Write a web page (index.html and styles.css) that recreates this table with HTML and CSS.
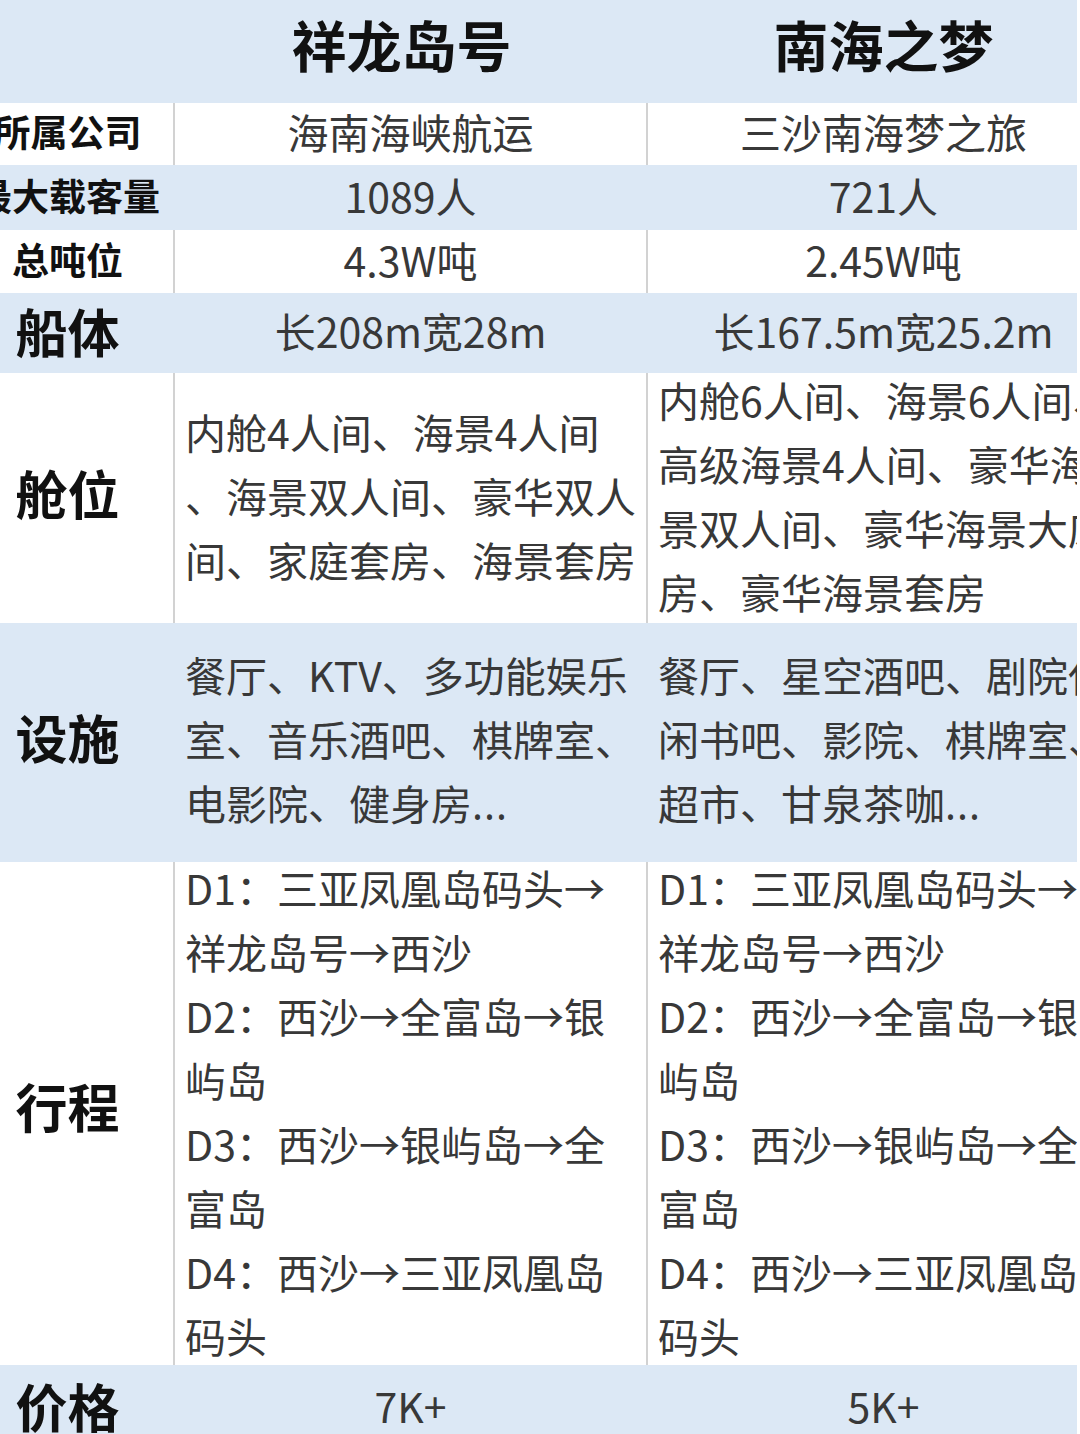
FILE: index.html
```html
<!DOCTYPE html>
<html lang="zh-CN">
<head>
<meta charset="utf-8">
<title>邮轮对比</title>
<link rel="stylesheet" href="styles.css">
</head>
<body>
<div class="frame">
  <div class="sheet">
    <div class="row blue head">
      <div class="cell label"></div>
      <div class="cell title title-a">祥龙岛号</div>
      <div class="cell title">南海之梦</div>
    </div>
    <div class="row r1">
      <div class="cell label small">所属公司</div>
      <div class="cell val">海南海峡航运</div>
      <div class="cell val">三沙南海梦之旅</div>
    </div>
    <div class="row blue r2">
      <div class="cell label small">最大载客量</div>
      <div class="cell val">1089人</div>
      <div class="cell val">721人</div>
    </div>
    <div class="row r3">
      <div class="cell label small">总吨位</div>
      <div class="cell val">4.3W吨</div>
      <div class="cell val">2.45W吨</div>
    </div>
    <div class="row blue r4">
      <div class="cell label big">船体</div>
      <div class="cell val">长208m宽28m</div>
      <div class="cell val">长167.5m宽25.2m</div>
    </div>
    <div class="row r5">
      <div class="cell label big">舱位</div>
      <div class="cell multi"><p>内舱4人间、海景4人间<br>、海景双人间、豪华双人<br>间、家庭套房、海景套房</p></div>
      <div class="cell multi"><p>内舱6人间、海景6人间、<br>高级海景4人间、豪华海<br>景双人间、豪华海景大床<br>房、豪华海景套房</p></div>
    </div>
    <div class="row blue r6">
      <div class="cell label big">设施</div>
      <div class="cell multi"><p>餐厅、KTV、多功能娱乐<br>室、音乐酒吧、棋牌室、<br>电影院、健身房<span class="dots">...</span></p></div>
      <div class="cell multi"><p>餐厅、星空酒吧、剧院休<br>闲书吧、影院、棋牌室、<br>超市、甘泉茶咖<span class="dots">...</span></p></div>
    </div>
    <div class="row r7">
      <div class="cell label big">行程</div>
      <div class="cell multi"><p>D1：三亚凤凰岛码头→<br>祥龙岛号→西沙<br>D2：西沙→全富岛→银<br>屿岛<br>D3：西沙→银屿岛→全<br>富岛<br>D4：西沙→三亚凤凰岛<br>码头</p></div>
      <div class="cell multi"><p>D1：三亚凤凰岛码头→<br>祥龙岛号→西沙<br>D2：西沙→全富岛→银<br>屿岛<br>D3：西沙→银屿岛→全<br>富岛<br>D4：西沙→三亚凤凰岛<br>码头</p></div>
    </div>
    <div class="row blue r8">
      <div class="cell label big">价格</div>
      <div class="cell val">7K+</div>
      <div class="cell val">5K+</div>
    </div>
  </div>
</div>
</body>
</html>
```
FILE: styles.css
```css
html, body {
  margin: 0;
  padding: 0;
  background: #ffffff;
  overflow: hidden;
}

body {
  font-family: "Noto Sans CJK SC", "Microsoft YaHei", "Noto Sans", sans-serif;
  color: #2e2e2e;
}

.frame {
  width: 1077px;
  height: 1434px;
  overflow: hidden;
}

.sheet {
  width: 1157px;
  margin-left: -38px;
}

.row {
  display: grid;
  grid-template-columns: 211px 473px 473px;
  grid-template-rows: minmax(0, 1fr);
  background: #ffffff;
}

.row.blue {
  background: #dce8f5;
}

.head { height: 103px; }
.r1 { height: 62px; }
.r2 { height: 65px; }
.r3 { height: 63px; }
.r4 { height: 80px; }
.r5 { height: 250px; }
.r6 { height: 239px; }
.r7 { height: 503px; }
.r8 { height: 80px; }

.cell {
  display: flex;
  align-items: center;
  justify-content: center;
  white-space: nowrap;
  min-width: 0;
  min-height: 0;
  padding-bottom: 6px;
}

.cell + .cell {
  border-left: 2px solid #d2d2d2;
}

.row.blue .cell + .cell {
  border-left-color: #dce8f5;
}

.label {
  color: #111111;
  font-weight: 700;
}

.label.small {
  font-size: 37px;
}

.label.big {
  font-size: 52px;
}

.r5 .label.big,
.r6 .label.big {
  padding-bottom: 12px;
}

.r7 .label.big {
  padding-bottom: 17px;
}

.r8 .cell {
  padding-bottom: 0;
}

.title {
  font-size: 55px;
  font-weight: 700;
  color: #111111;
  padding-bottom: 18px;
}

.title-a {
  padding-right: 18px;
}

.val {
  font-size: 41px;
  font-weight: 400;
  color: #383838;
}

.multi {
  justify-content: flex-start;
  padding-left: 10px;
  padding-bottom: 6px;
  font-size: 41px;
  line-height: 64px;
  color: #383838;
}

.r6 .multi {
  padding-bottom: 7px;
}

.r7 .multi {
  padding-bottom: 5px;
}

.multi p {
  margin: 0;
}

.dots {
  font-family: "Noto Sans", "Open Sans", sans-serif;
  letter-spacing: 1px;
}
```
